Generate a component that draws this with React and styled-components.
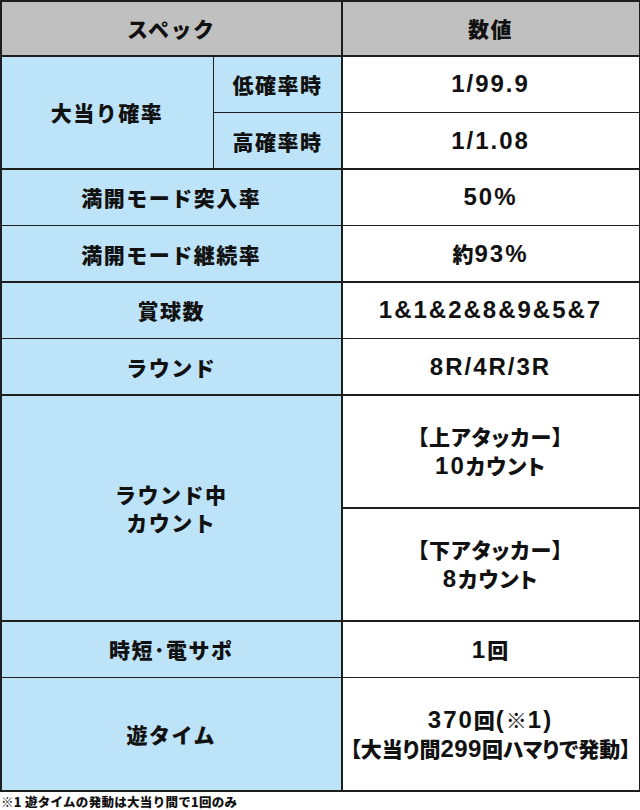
import React from "react";
import styled, { createGlobalStyle } from "styled-components";

const Global = createGlobalStyle`
  html, body { margin: 0; padding: 0; background: #ffffff; }
  body { width: 640px; }
`;

const Page = styled.div`
  width: 640px;
  display: flex;
  flex-direction: column;
`;

const Table = styled.div`
  display: grid;
  grid-template-columns: 211px 127px 1fr;
  grid-template-rows: 53.5px repeat(6, 55px) 111.5px 111.5px 55px 111.5px;
  gap: 1.5px;
  padding: 1.5px;
  background: #1e1e1e;
  height: 792px;
  box-sizing: border-box;
`;

const Cell = styled.div`
  display: flex;
  align-items: center;
  justify-content: center;
  text-align: center;
  color: #111;
  font-weight: 700;
  line-height: 28px;
  grid-column: ${(p) => p.$col || "auto"};
  grid-row: ${(p) => p.$row || "auto"};
  background: ${(p) =>
    p.$kind === "head" ? "#c0c0c0" : p.$kind === "label" ? "#bce3f7" : "#ffffff"};
`;

const LabelText = styled.span`
  font-family: "Noto Sans CJK JP", sans-serif;
  font-size: 21px;
  letter-spacing: 1.5px;
  font-weight: 900;
`;

const ValueText = styled.span`
  font-family: "Liberation Sans", "Noto Sans CJK JP", sans-serif;
  font-size: 24px;
  letter-spacing: 2px;
  font-weight: 700;
  white-space: nowrap;
`;

const TightLine = styled.span`
  letter-spacing: 0.5px;
`;

const Ja = styled.span`
  font-family: "Noto Sans CJK JP", sans-serif;
  font-size: 21px;
  font-weight: 900;
  letter-spacing: ${(p) => (p.$tight ? "0px" : "1px")};
  font-feature-settings: "palt";
`;

const Note = styled.div`
  font-family: "Noto Sans CJK JP", sans-serif;
  font-weight: 900;
  font-size: 12.5px;
  letter-spacing: 0.3px;
  color: #111;
  padding: 3px 0 0 1px;
  line-height: 14px;
`;

const rows = [
  { label: "満開モード突入率", value: <>50%</> },
  { label: "満開モード継続率", value: <><Ja>約</Ja>93%</> },
  { label: "賞球数", value: <>1&amp;1&amp;2&amp;8&amp;9&amp;5&amp;7</> },
  { label: "ラウンド", value: <>8R/4R/3R</> },
];

export default function App() {
  return (
    <Page>
      <Global />
      <Table>
        <Cell $kind="head" $col="1 / 3">
          <LabelText>スペック</LabelText>
        </Cell>
        <Cell $kind="head">
          <LabelText>数値</LabelText>
        </Cell>

        <Cell $kind="label" $col="1" $row="2 / 4">
          <LabelText>大当り確率</LabelText>
        </Cell>
        <Cell $kind="label">
          <LabelText>低確率時</LabelText>
        </Cell>
        <Cell>
          <ValueText>1/99.9</ValueText>
        </Cell>
        <Cell $kind="label" $col="2">
          <LabelText>高確率時</LabelText>
        </Cell>
        <Cell>
          <ValueText>1/1.08</ValueText>
        </Cell>

        {rows.map((r) => (
          <React.Fragment key={r.label}>
            <Cell $kind="label" $col="1 / 3">
              <LabelText>{r.label}</LabelText>
            </Cell>
            <Cell>
              <ValueText>{r.value}</ValueText>
            </Cell>
          </React.Fragment>
        ))}

        <Cell $kind="label" $col="1 / 3" $row="8 / 10">
          <LabelText>
            ラウンド中
            <br />
            カウント
          </LabelText>
        </Cell>
        <Cell $col="3" $row="8">
          <ValueText>
            <Ja>【上アタッカー】</Ja>
            <br />
            10<Ja>カウント</Ja>
          </ValueText>
        </Cell>
        <Cell $col="3" $row="9">
          <ValueText>
            <Ja>【下アタッカー】</Ja>
            <br />
            8<Ja>カウント</Ja>
          </ValueText>
        </Cell>

        <Cell $kind="label" $col="1 / 3" $row="10">
          <LabelText>時短･電サポ</LabelText>
        </Cell>
        <Cell $col="3" $row="10">
          <ValueText>
            1<Ja>回</Ja>
          </ValueText>
        </Cell>

        <Cell $kind="label" $col="1 / 3" $row="11">
          <LabelText>遊タイム</LabelText>
        </Cell>
        <Cell $col="3" $row="11">
          <ValueText>
            370<Ja>回</Ja>(<Ja>※</Ja>1)
            <br />
            <TightLine>
              <Ja $tight>【大当り間</Ja>299<Ja $tight>回ハマりで発動】</Ja>
            </TightLine>
          </ValueText>
        </Cell>
      </Table>
      <Note>※1 遊タイムの発動は大当り間で1回のみ</Note>
    </Page>
  );
}
